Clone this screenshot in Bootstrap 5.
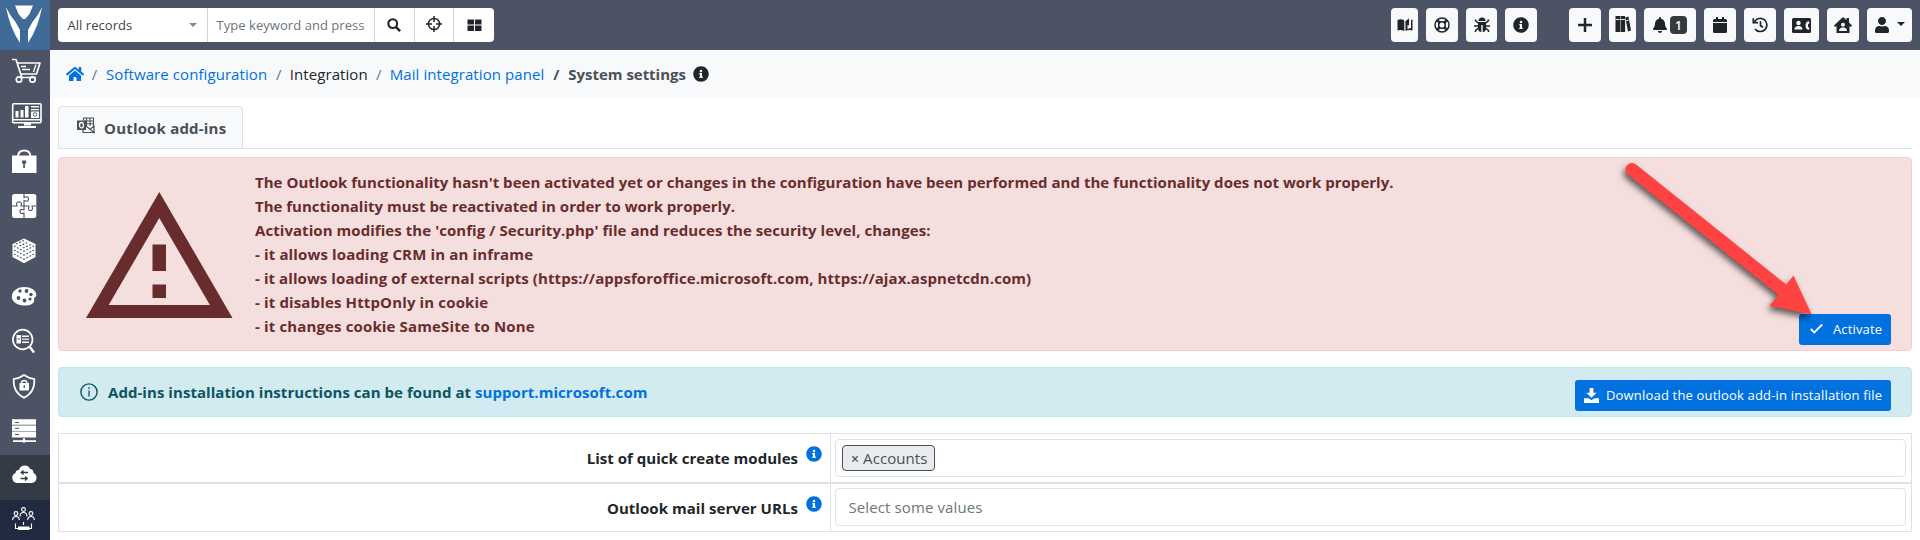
<!DOCTYPE html>
<html lang="en">
<head>
<meta charset="utf-8">
<meta name="viewport" content="width=device-width, initial-scale=1">
<title>System settings</title>
<link rel="stylesheet" href="https://cdn.jsdelivr.net/npm/bootstrap@5.3.0/dist/css/bootstrap.min.css">
<style>
body{font-family:"Open Sans","Noto Sans",sans-serif;font-size:15px;line-height:24px;letter-spacing:.08px;color:#212529;background:#fff;height:540px;overflow:hidden}
a{color:#0071de;text-decoration:none}
svg{display:block;flex:none}
.side{width:50px;height:540px;background:#4b5365}
.side a{display:block;height:45px}
.side .brand{height:50px;background:#406b99}
.side .sub-on{background:#343a46}
.side .on{background:#202b41;height:40px}
.topbar{height:50px;background:#4b5365;padding:8px 8px 8px 8px}
.search{height:34px;border-radius:4px;overflow:hidden;font-size:13px;letter-spacing:.05px;line-height:34px;background:#fff}
.search>div{border-left:1px solid #ced4da;height:34px}
.search>div:first-child{border-left:0}
.s-all{width:149px;padding:0 10px 0 9.5px;color:#444}
.s-key{width:167px;padding-left:8.5px;color:#6c757d;white-space:nowrap}
.caret{width:0;height:0;border:4px solid transparent;border-top:4px solid #888;border-bottom:0}
.tb{height:34px;background:#f8f9fb;border-radius:4px;display:flex;align-items:center;justify-content:center;color:#212529}
.count{background:#343a40;color:#fff;border-radius:4px;width:17px;height:18px;font-size:12px;line-height:19px;font-weight:600;text-align:center;letter-spacing:0}
.crumbs{height:48px;background:#f8f9fb;padding:0 16px 1px 16px}
.crumbs .sep{color:#6c757d;width:15px;text-align:center}
.tabs{margin:8px 8px 0;height:43px;border-bottom:1px solid #dee2e6}
.tab-on{width:185px;height:42px;border:1px solid #dee2e6;border-bottom:0;border-radius:4px 4px 0 0;background:#f8f9fb;color:#495057;padding:1px 0 0 18px;letter-spacing:.19px}
.note{margin:0 8px;border-radius:4px;border:1px solid;font-weight:700;letter-spacing:.05px}
.note-red{margin-top:8px;height:194px;background:#f5dfde;border-color:#f1cfd0;color:#692c2c;padding:12px 20px 5px 27px}
.note-blue{margin-top:16px;height:50px;background:#d1ebf0;border-color:#bee5eb;color:#0c5460;padding:0 20px 0 21px}
.act{background:#0071de;color:#fff;border-radius:3px;height:31px;font-size:13px;line-height:31px;font-weight:400;letter-spacing:.15px}
.l3{letter-spacing:.08px}.l4{letter-spacing:.14px}
.grid-box{margin:16px 8px 0;border:1px solid #dee2e6;height:99px}
.frow{height:48px}
.frow+.frow{height:49px;border-top:2px solid #dee2e6}
.flabel{width:772px;border-right:1px solid #dee2e6;font-weight:700;letter-spacing:.02px;padding:0 8px 0 0}
.fbox{height:38px;margin:5px 5px 0 4px;border:1px solid #dee2e6;border-radius:4px;color:#6c757d}
.tag{height:26px;border:1px solid #495057;border-radius:4px;background:#e9ecef;color:#495057;line-height:24px;width:93px;margin:5px 0 0 6px;padding-left:8px}
.pointer{position:absolute;left:1610px;top:150px;pointer-events:none;filter:drop-shadow(-2px 4px 3px rgba(0,0,0,.6))}
</style>
</head>
<body>
<svg width="0" height="0" class="position-absolute">
<symbol id="i-info" viewBox="0 0 512 512"><path fill="currentColor" d="M256 8C119 8 8 119 8 256c0 137 111 248 248 248s248-111 248-248C504 119 393 8 256 8zm0 110c23.200 0 42 18.800 42 42s-18.800 42-42 42-42-18.800-42-42 18.800-42 42-42zm56 254c0 6.600-5.400 12-12 12h-88c-6.600 0-12-5.400-12-12v-24c0-6.600 5.400-12 12-12h12v-64h-12c-6.600 0-12-5.400-12-12v-24c0-6.600 5.400-12 12-12h64c6.600 0 12 5.400 12 12v100h12c6.600 0 12 5.400 12 12v24z"/></symbol>
</svg>
<div class="d-flex">
<nav class="side flex-shrink-0">
<a class="brand" href="#"><svg width="50" height="50" viewBox="0 0 50 50" fill="#fff"><path d="M15 5.500h18l-3.500 8.500-4 4.500q-1.500 1-3 0l-4-4.500zM6 7q3.500 8 9.500 15l4.500 8v13Q9.500 27 6 7zM42 7q-3.500 8-9.500 15l-4.500 8v13Q38.500 27 42 7z"/></svg></a>
<a href="#"><svg width="50" height="45" viewBox="0 50 50 45" fill="none" stroke="#fff" stroke-width="1.700"><path d="M12 59.500h4l6 18.500M17 63h23l-3.500 11H20.500M22 77.500h14" stroke-linejoin="round"/><path d="M21 66.500h5M22 69.500h8M36 64.500l-2.500 7.500" stroke-width="1.300"/><circle cx="19" cy="79.500" r="2.700"/><circle cx="32.500" cy="79.500" r="2.700"/></svg></a>
<a href="#"><svg width="50" height="45" viewBox="0 95 50 45" fill="#fff"><rect x="12.700" y="103.700" width="28.300" height="19" rx="1" fill="none" stroke="#fff" stroke-width="1.600"/><path d="M13 119h28v1.400H13zM24 123h7v2.500h-7zM18 126h18v2H18zM15.500 111h3v6.500h-3zM20.500 110h3v7.500h-3zM25 106h3.500v11.500H25zM31 106h8v1.500h-8zM31 109h8v1.200h-8zM31 111.500h8v6.500h-8z"/><circle cx="35" cy="114.500" r="1.800" fill="none" stroke="#4b5365" stroke-width=".9"/></svg></a>
<a href="#"><svg width="50" height="45" viewBox="0 140 50 45" fill="#fff"><path d="M12 155.500h24.500V173H12z"/><path d="M18 156q.5-5.500 6.200-5.500t6.200 5.500" fill="none" stroke="#fff" stroke-width="2"/><path d="M22 160.500h4.200v3h-1.300v4.500h-1.700v-4.500H22z" fill="#4b5365"/></svg></a>
<a href="#"><svg width="50" height="45" viewBox="0 185 50 45"><rect x="12" y="194" width="24.300" height="24" rx="2.500" fill="#fff"/><path d="M24 194v3.500q4.500-2 4.500 1.500t-4.500 1.500v5.500h-3q1.500-4-2-4t-2 4h-5M24 206v4q-4-1.500-4 1.500t4 1.500v5M24 206h5q-1.500 4.500 1.500 4.500t1.500-4.500h4" fill="none" stroke="#4b5365" stroke-width="1.100"/></svg></a>
<a href="#"><svg width="50" height="45" viewBox="0 230 50 45"><path d="M24 238.500l11.500 5.500v13L24 263.200 12.500 257v-13z" fill="#fff"/><path d="M14 246l10 5.300M14 250l10 5.300M14 254l10 5.300M34 246l-10 5.300M34 250l-10 5.300M34 254l-10 5.300M16 244l9-4M19.500 246l9-4M23 248l9-4" stroke="#4b5365" stroke-width="1.200" stroke-dasharray="1.800 1.600" fill="none"/></svg></a>
<a href="#"><svg width="50" height="45" viewBox="0 275 50 45"><path d="M24 287c7 0 12.300 3.500 12.300 8 0 2.500-2.300 2-2.300 4s1 2.500-1.500 4.500-5.500 2-8.500 2c-7 0-12.200-4-12.200-9S17 287 24 287z" fill="#fff"/><g fill="#4b5365"><circle cx="20" cy="291" r="1.700"/><circle cx="26.500" cy="291" r="1.900"/><circle cx="31" cy="294.500" r="1.700"/><circle cx="18.500" cy="298" r="1.900"/><circle cx="24.500" cy="300.500" r="1.900"/><circle cx="30" cy="299" r="1.600"/></g></svg></a>
<a href="#"><svg width="50" height="45" viewBox="0 320 50 45"><circle cx="22.700" cy="339.500" r="9.800" fill="none" stroke="#fff" stroke-width="1.700"/><path d="M29.500 346.500l4.500 6" stroke="#fff" stroke-width="2.400"/><path d="M16.500 335h4.500v8.500h-4.500zM22 335.500h7v1.500h-7zM22 338.500h7v1.300h-7zM22 341.500h7v1.500h-7z" fill="#fff"/><path d="M17.500 339h2.500" stroke="#4b5365"/></svg></a>
<a href="#"><svg width="50" height="45" viewBox="0 365 50 45"><path d="M24 375q5 3.500 10.300 4 1 13-10.300 18.700Q12.700 392 13.700 379 19 378.500 24 375z" fill="none" stroke="#fff" stroke-width="1.700"/><path d="M19.500 383h9.500v7.500h-9.500z" fill="#fff"/><path d="M21.500 383q0-2.500 2.700-2.500t2.700 2.500" fill="none" stroke="#fff" stroke-width="1.300"/><path d="M24.200 385v3" stroke="#4b5365" stroke-width="1.300"/></svg></a>
<a href="#"><svg width="50" height="45" viewBox="0 410 50 45" fill="#fff"><path d="M12 419.300h24v5.500H12zM12 425.400h24v5.500H12zM12 431.500h24v6H12zM13 440.300h9.500l1-2.300h1l1 2.300H36v1.700H25.500L24 443l-1.500-1H13z"/><path d="M15 422.500h4M15 428.300h4M15 434.500h4" stroke="#4b5365" stroke-width="1.100"/></svg></a>
<a class="sub-on" href="#"><svg width="50" height="45" viewBox="0 455 50 45"><path d="M17 483a5.200 5.200 0 0 1-1.500-10q0-3 3.500-3 1-4.500 6-4.500 4 0 5 3.500 3.500 0 3.500 4 3 1.500 3 4.500 0 4.500-4.500 5.500z" fill="#fff"/><path d="M28 472.500h-6m1.500-2l-2.300 2 2.300 2M20.500 478.500h6m-1.500-2l2.300 2-2.300 2" stroke="#343a46" stroke-width="1.300" fill="none"/></svg></a>
<a class="on" href="#"><svg width="50" height="40" viewBox="0 500 50 40" fill="none" stroke="#fff" stroke-width="1.100"><circle cx="23.500" cy="509.500" r="1.900"/><circle cx="16" cy="513.500" r="1.900"/><circle cx="31" cy="513.500" r="1.900"/><path d="M20 516.500q0-4 3.500-4t3.500 4M12.700 520q0-3.500 3.300-3.500t3.300 3.500M27.700 520q0-3.500 3.300-3.500t3.300 3.500M15.500 523.500v5h16v-5M23.500 522v3"/><path d="M18 526.500h11.500v3.500H18z" fill="#fff" stroke="none"/></svg></a>
</nav>
<div class="flex-grow-1">
<header class="topbar d-flex justify-content-between">
<div class="search d-flex">
<div class="s-all d-flex align-items-center justify-content-between"><span>All records</span><i class="caret"></i></div>
<div class="s-key">Type keyword and press</div>
<div class="d-flex align-items-center justify-content-center" style="width:40px;padding-right:2px"><svg width="14" height="14" viewBox="0 0 16 16" fill="none" stroke="#212529"><circle cx="6.500" cy="6.500" r="5" stroke-width="2.400"/><path d="M10.300 10.300l4.700 4.700" stroke-width="2.800"/></svg></div>
<div class="d-flex align-items-center justify-content-center" style="width:39px"><svg width="16" height="16" viewBox="0 0 16 16" style="margin-top:-3px" fill="none" stroke="#212529" stroke-width="1.500"><circle cx="8" cy="8" r="5.600"/><path d="M8 0v6M8 10v6M0 8h6M10 8h6"/></svg></div>
<div class="d-flex align-items-center justify-content-center" style="width:41px"><svg width="15" height="14" viewBox="0 0 15 14" fill="#212529"><path d="M.5 1.500h6.500v5H.5zM8 1.500h6.500v5H8zM.5 7.500h6.500v5.500H.5zM8 7.500h6.500v5.500H8z"/></svg></div>
</div>
<div class="d-flex" style="gap:32px">
<div class="d-flex gap-2">
<div class="tb" style="width:27px"><svg width="16" height="16" viewBox="0 0 16 16" fill="#212529"><path d="M.5 3Q4 1.500 7.300 3.500V14Q4 12.500.5 13.500zM8.500 4l3.500-2.500v7L10.500 8v4l3.500-1V3l1.500-.5v11Q11.500 12.500 8.500 14z"/></svg></div>
<div class="tb" style="width:32px"><svg width="16" height="16" viewBox="0 0 16 16" fill="none" stroke="#212529" stroke-width="1.500"><circle cx="8" cy="8" r="7"/><circle cx="8" cy="8" r="3.300"/><path d="M2.500 3.500l3 3M3.500 2.500l3 3M13.500 3.500l-3 3M12.500 2.500l-3 3M2.500 12.500l3-3M3.500 13.500l3-3M13.500 12.500l-3-3M12.500 13.500l-3-3" stroke-width="1.200"/></svg></div>
<div class="tb" style="width:31px"><svg width="16" height="16" viewBox="0 0 16 16" fill="#212529"><path d="M4.500 4a3.500 3.500 0 0 1 7 0zM4 5h8v6.500A3.500 3.500 0 0 1 8.700 15V8H7.300v7A3.500 3.500 0 0 1 4 11.500z"/><path d="M1.500 2.500v1L4 6M14.500 2.500v1L12 6M0 9h4M12 9h4M1.500 15v-1.500L4.500 11M14.500 15v-1.500L11.500 11" fill="none" stroke="#212529" stroke-width="1.600"/></svg></div>
<div class="tb" style="width:32px"><svg width="16" height="16"><use href="#i-info"/></svg></div>
</div>
<div class="d-flex gap-2">
<div class="tb" style="width:32px"><svg width="14" height="14" viewBox="0 0 14 14"><path d="M7 0v14M0 7h14" stroke="#212529" stroke-width="2.500"/></svg></div>
<div class="tb" style="width:27px"><svg width="16" height="16" viewBox="0 0 16 16" fill="#212529" style="margin-top:-2px"><path d="M.5 0h4.600v16H.5zM5.600 0h4.500v16H5.600zM10.300 1.500l3.200-1L16 14.500l-3 1z"/><path d="M.5 3.500h4.300M5.600 3.500h4.300M10.800 4.800l3-.8" stroke="#f8f9fb" stroke-width=".9"/></svg></div>
<div class="tb" style="width:52px;gap:3px"><svg width="14" height="16" viewBox="0 0 448 512" fill="#212529"><path d="M224 512c35.300 0 64-28.700 64-64H160c0 35.400 28.700 64 64 64zm215.400-149.700c-19.300-20.800-55.500-52-55.500-154.300 0-77.700-54.500-139.900-127.900-155.200V32c0-17.700-14.300-32-32-32s-32 14.300-32 32v20.800C118.600 68.100 64 130.300 64 208c0 102.300-36 133.500-55.400 154.300-6 6.400-8.700 14.200-8.600 21.700.1 16.400 13 32 32.100 32h383.800c19.100 0 32-15.600 32.100-32 0-7.600-2.600-15.300-8.600-21.700z"/></svg><span class="count">1</span></div>
<div class="tb" style="width:32px"><svg width="14" height="16" viewBox="0 0 14 16" fill="#212529"><path d="M0 5V3.500Q0 2 1.500 2H3V0h2v2h4V0h2v2h1.500Q14 2 14 3.500V5zM0 6h14v8.500q0 1.500-1.500 1.500h-11Q0 16 0 14.500z"/></svg></div>
<div class="tb" style="width:32px"><svg width="16" height="16" viewBox="0 0 16 16" fill="none" stroke="#212529" stroke-width="1.700"><path d="M2.500 5a6.600 6.600 0 1 1 .5 7.200M1.300 1.500V6H6M8.500 4.500V9l2.500 1.500" transform="translate(0 -.3)"/></svg></div>
<div class="tb" style="width:35px"><svg width="19" height="15" viewBox="0 0 19 15"><rect width="19" height="15" rx="1.500" fill="#212529"/><circle cx="6.500" cy="5" r="2.200" fill="#f8f9fb"/><path d="M2.500 11.500Q2.500 8 6.500 8t4 3.500zM16.500 3q-3 1-3 4.500t3 4.500l1-1.700-1.500-1.500V6.500L17.500 5z" fill="#f8f9fb"/></svg></div>
<div class="tb" style="width:32px"><svg width="18" height="16" viewBox="0 0 18 16"><path d="M9 0l3.500 3V1h2.500v4.500L18 8.500l-1 1.500-1.500-1V16h-13V9L1 10 0 8.500z" fill="#212529"/><circle cx="9" cy="7.700" r="2" fill="#f8f9fb"/><path d="M5 14q0-3.500 4-3.500t4 3.500z" fill="#f8f9fb"/></svg></div>
<div class="tb" style="width:45px;gap:8px;padding-left:1px"><svg width="14" height="16" viewBox="0 0 448 512" fill="#212529"><path d="M224 256c70.700 0 128-57.300 128-128S294.700 0 224 0 96 57.300 96 128s57.300 128 128 128zm89.600 32h-16.700c-22.200 10.200-46.900 16-72.900 16s-50.600-5.800-72.900-16h-16.700C60.200 288 0 348.200 0 422.400V464c0 26.500 21.500 48 48 48h352c26.500 0 48-21.500 48-48v-41.600c0-74.200-60.200-134.400-134.400-134.400z"/></svg><i class="caret" style="border-top-color:#212529;margin-top:-2px"></i></div>
</div>
</div>
</header>
<div class="crumbs d-flex align-items-center">
<svg width="18" height="16" viewBox="0 0 576 512" fill="#0071de"><path d="M280.400 148.300L96 300v164a16 16 0 0 0 16 16h112a16 16 0 0 0 16-16v-96a16 16 0 0 1 16-16h64a16 16 0 0 1 16 16v96a16 16 0 0 0 16 16h112a16 16 0 0 0 16-16V300L295.700 148.300a12 12 0 0 0-15.300 0zM571.600 251.500L488 182.600V44a12 12 0 0 0-12-12h-56a12 12 0 0 0-12 12v72.600L318.500 43a48 48 0 0 0-61 0L4.300 251.500a12 12 0 0 0-1.600 16.900l25.500 31A12 12 0 0 0 45 301l235.400-193.700a12 12 0 0 1 15.300 0L531 301a12 12 0 0 0 16.900-1.600l25.500-31a12 12 0 0 0-1.800-16.900z"/></svg>
<span class="sep" style="margin:0 4px 0 3px">/</span><a href="#">Software configuration</a>
<span class="sep" style="margin:0 3.500px 0 4px">/</span><span>Integration</span>
<span class="sep" style="margin:0 3.500px">/</span><a href="#">Mail integration panel</a>
<b class="sep" style="margin:0 4.500px;color:#495057">/</b><b style="color:#495057;letter-spacing:-.03px">System settings</b>
<svg width="16" height="16" style="margin-left:7.500px"><use href="#i-info"/></svg>
</div>
<div class="tabs"><div class="tab-on d-flex align-items-center fw-bold"><svg width="18" height="17" viewBox="0 0 18 17" style="margin:-5px 9px 0 0" fill="none" stroke="#495057"><path d="M6.500 3V1h10v8M6.500 4h10M9.500 1v8M13 1v8M6.500 6.700h10" stroke-width="1.100"/><path d="M9 9l8 6.500H6V13M17 8.500v7L13 12.200l4-3" stroke-width="1.200"/><path d="M0 3.500h9v9.500H0z" fill="#495057" stroke="none"/><ellipse cx="4.500" cy="8.200" rx="2" ry="2.700" stroke="#f8f9fb" stroke-width="1.300"/></svg>Outlook add-ins</div></div>
<div class="note note-red d-flex">
<svg width="147" height="127" viewBox="0 0 147 127" style="margin-top:22px" fill="#692c2c"><path fill-rule="evenodd" d="M73.300 0l73.200 126H0zM73.300 26L22.700 113h101.200zM66.500 52.500H80V79H66.500zM66.500 92.500H80V106H66.500z"/></svg>
<div class="flex-grow-1" style="margin-left:22px">
<div style="letter-spacing:.027px">The Outlook functionality hasn't been activated yet or changes in the configuration have been performed and the functionality does not work properly.</div>
<div style="letter-spacing:0">The functionality must be reactivated in order to work properly.</div>
<div style="letter-spacing:.06px">Activation modifies the 'config / Security.php' file and reduces the security level, changes:</div>
<div class="l4">- it allows loading CRM in an inframe</div>
<div class="l3">- it allows loading of external scripts (https://appsforoffice.microsoft.com, https://ajax.aspnetcdn.com)</div>
<div class="l4">- it disables HttpOnly in cookie</div>
<div class="l4">- it changes cookie SameSite to None</div>
</div>
<a href="#" class="act align-self-end d-flex align-items-center" style="width:92px;padding-left:11px"><svg width="13" height="11" viewBox="0 0 13 11" style="margin-right:10px;margin-top:-2px"><path d="M.8 6l3.500 3.500L12.200 1.500" fill="none" stroke="#fff" stroke-width="1.800"/></svg>Activate</a>
</div>
<div class="note note-blue d-flex align-items-center">
<svg width="18" height="18" viewBox="0 0 18 18" style="margin-right:10px"><circle cx="9" cy="9" r="8.100" fill="none" stroke="#0c5460" stroke-width="1.400"/><path d="M9 7.500v6M9 4.300v1.600" stroke="#0c5460" stroke-width="1.300"/></svg>
<span>Add-ins installation instructions can be found at <a href="#">support.microsoft.com</a></span>
<a href="#" class="act ms-auto d-flex align-items-center" style="width:316px;padding-left:9px;margin-top:6px;letter-spacing:.18px"><svg width="15" height="15" viewBox="0 0 16 16" style="margin-right:7px" fill="#fff"><path d="M6 0h4v5h3.500L8 10.500 2.500 5H6zM0 11h5l3 2 3-2h5v5H0z"/></svg>Download the outlook add-in installation file</a>
</div>
<div class="grid-box">
<div class="frow d-flex"><div class="flabel d-flex align-items-center justify-content-end">List of quick create modules<svg width="16" height="16" style="margin:-8px 0 0 8px;color:#0071de"><use href="#i-info"/></svg></div><div class="fbox flex-grow-1"><div class="tag"><b style="font-size:14px;margin-right:4px;font-weight:600">×</b>Accounts</div></div></div>
<div class="frow d-flex"><div class="flabel d-flex align-items-center justify-content-end" style="letter-spacing:.05px">Outlook mail server URLs<svg width="16" height="16" style="margin:-8px 0 0 8px;color:#0071de"><use href="#i-info"/></svg></div><div class="fbox flex-grow-1" style="padding:6px 0 0 12.500px;margin-top:4px;letter-spacing:.11px">Select some values</div></div>
</div>
</div>
</div>
<svg class="pointer" width="220" height="180" viewBox="1610 150 220 180"><path d="M1632 169.500L1782 289.500" stroke="#ff4343" stroke-width="13" stroke-linecap="round"/><path d="M1811.700 314.500L1793.500 275.500 1769.500 306z" fill="#ff4343"/></svg>
<script src="https://cdn.jsdelivr.net/npm/bootstrap@5.3.0/dist/js/bootstrap.bundle.min.js"></script>
</body>
</html>
